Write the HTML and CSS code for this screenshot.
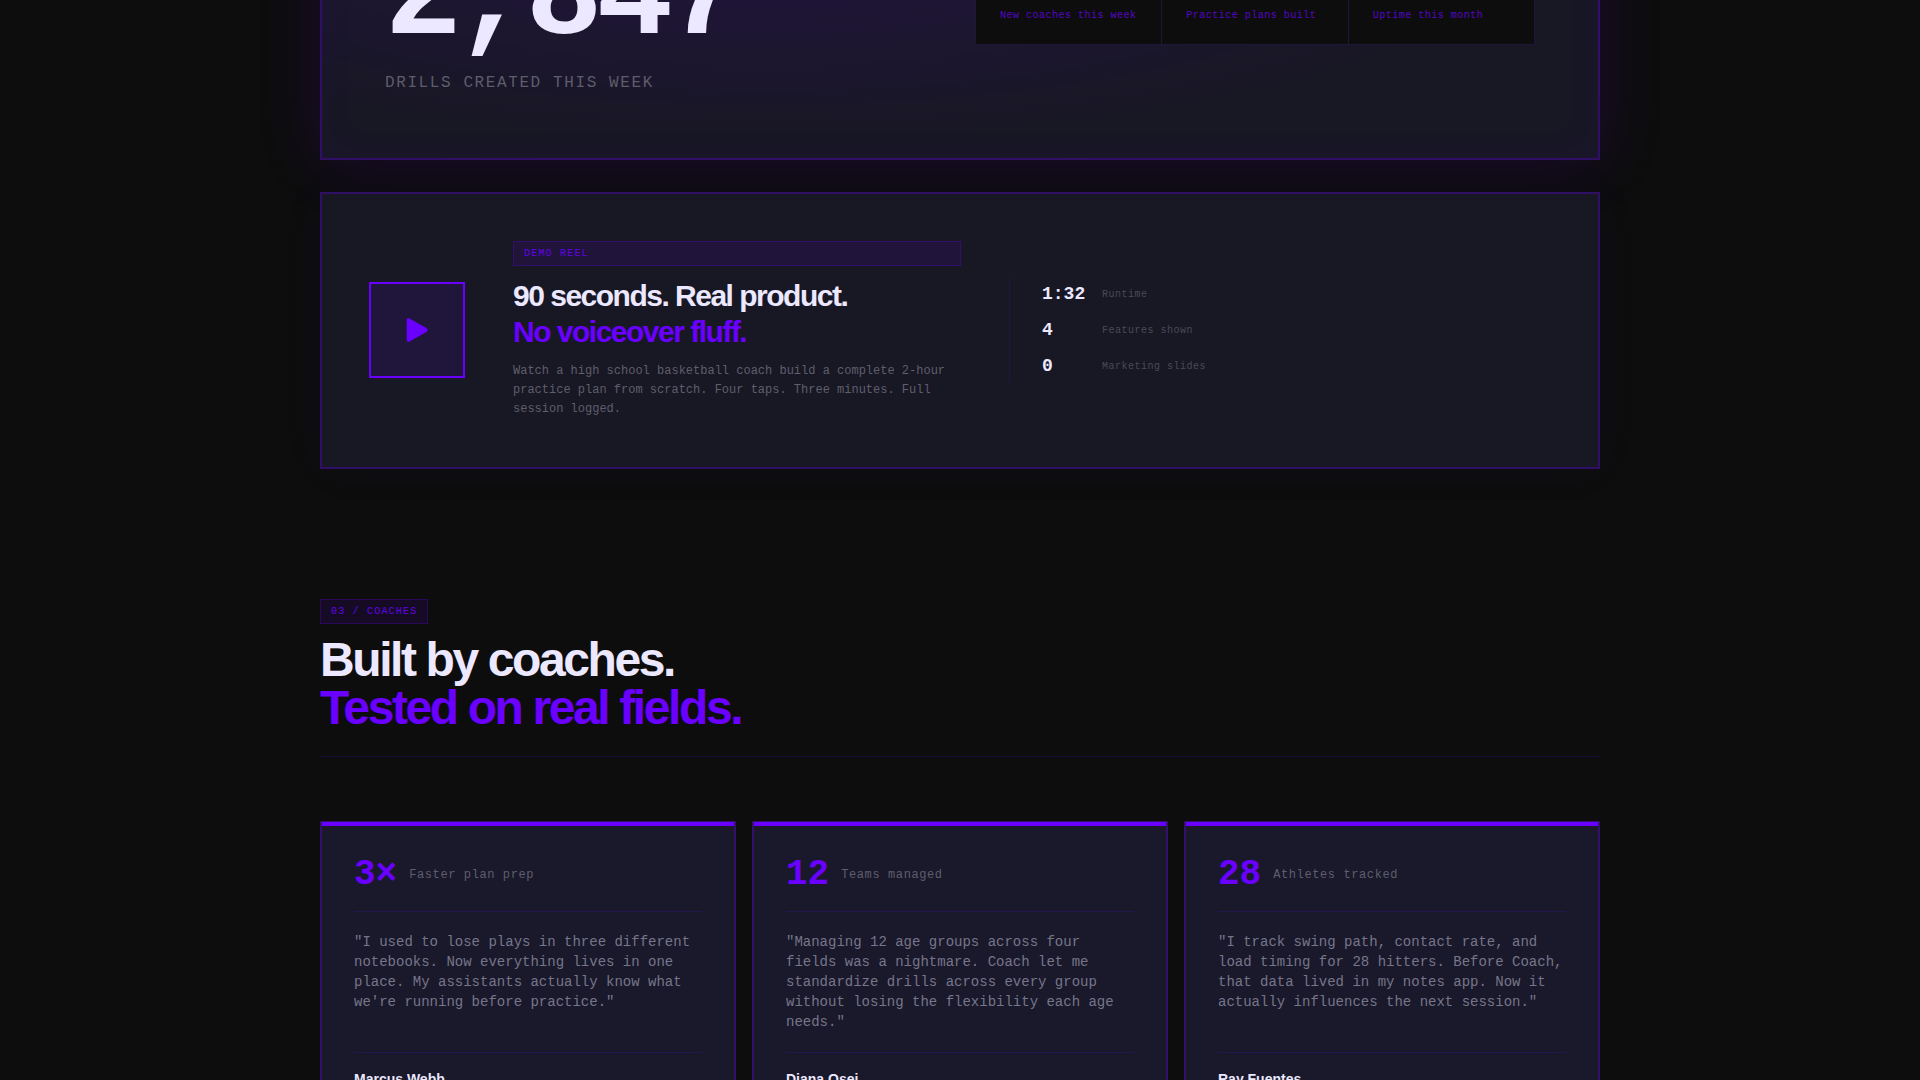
FILE: index.html
```
<!DOCTYPE html>
<html lang="en">
<head>
<meta charset="utf-8">
<meta name="viewport" content="width=device-width, initial-scale=1">
<title>Coach</title>
<link rel="stylesheet" href="styles.css">
</head>
<body>
<main class="page">
  <section class="hero">
    <div class="hero-main">
      <p class="hero-number">2,847</p>
      <p class="hero-label">DRILLS CREATED THIS WEEK</p>
    </div>
    <ul class="hero-stats">
      <li>New coaches this week</li>
      <li>Practice plans built</li>
      <li>Uptime this month</li>
    </ul>
  </section>

  <section class="demo">
    <button class="play" type="button" aria-label="Play demo reel">
      <svg width="24" height="24" viewBox="0 0 24 24" aria-hidden="true"><path d="M1.700 2.200v19.600c0 1.600 1.500 2.300 2.900 1.600l16.800-9.500c1.700-1 1.700-2.800 0-3.800L4.600.6C3.200-.1 1.700.6 1.700 2.200z" fill="currentColor"/></svg>
    </button>
    <div class="demo-text">
      <span class="badge">DEMO REEL</span>
      <h2 class="demo-title">90 seconds. Real product.<br><em>No voiceover fluff.</em></h2>
      <p class="demo-copy">Watch a high school basketball coach build a complete 2-hour practice plan from scratch. Four taps. Three minutes. Full session logged.</p>
    </div>
    <dl class="facts">
      <div><dt>Runtime</dt><dd>1:32</dd></div>
      <div><dt>Features shown</dt><dd>4</dd></div>
      <div><dt>Marketing slides</dt><dd>0</dd></div>
    </dl>
  </section>

  <section class="coaches">
    <header class="section-head">
      <span class="badge">03 / COACHES</span>
      <h2 class="section-title">Built by coaches.<br><em>Tested on real fields.</em></h2>
    </header>
    <div class="cards">
      <article class="card">
        <p class="metric"><strong>3×</strong><span>Faster plan prep</span></p>
        <blockquote>"I used to lose plays in three different notebooks. Now everything lives in one place. My assistants actually know what we're running before practice."</blockquote>
        <p class="author">Marcus Webb</p>
      </article>
      <article class="card">
        <p class="metric"><strong>12</strong><span>Teams managed</span></p>
        <blockquote>"Managing 12 age groups across four fields was a nightmare. Coach let me standardize drills across every group without losing the flexibility each age needs."</blockquote>
        <p class="author">Diana Osei</p>
      </article>
      <article class="card">
        <p class="metric"><strong>28</strong><span>Athletes tracked</span></p>
        <blockquote>"I track swing path, contact rate, and load timing for 28 hitters. Before Coach, that data lived in my notes app. Now it actually influences the next session."</blockquote>
        <p class="author">Ray Fuentes</p>
      </article>
    </div>
  </section>
</main>
</body>
</html>
```
FILE: styles.css
```
:root {
  --bg: #0d0d0d;
  --accent: #6a00ff;
  --light: #ebe8ff;
  --line: rgba(106, 0, 255, 0.3);
  --line-soft: rgba(90, 20, 255, 0.17);
  --mono: "Liberation Mono", monospace;
  --sans: "Liberation Sans", sans-serif;
}

* {
  box-sizing: border-box;
  margin: 0;
  padding: 0;
}

html {
  overflow: hidden;
}

body {
  height: 100vh;
  overflow: hidden;
  background: var(--bg);
  color: var(--light);
  font-family: var(--mono);
}

em {
  font-style: normal;
  color: var(--accent);
}

.page {
  max-width: 1280px;
  margin: 0 auto;
}

.hero {
  display: grid;
  grid-template-columns: 1fr 1fr;
  align-items: center;
  gap: 30px;
  margin-top: -243px;
  padding: 120px 63px 65px;
  border: 2px solid var(--line);
  background:
    radial-gradient(ellipse at 35% 45%, rgba(106, 0, 255, 0.12), transparent 65%),
    #181724;
  box-shadow:
    0 0 60px rgba(120, 0, 255, 0.15),
    inset 0 0 40px rgba(106, 0, 255, 0.04);
}

.hero-main {
  padding-top: 56px;
}

.hero-number {
  font-size: 128px;
  font-weight: 700;
  line-height: 128px;
  letter-spacing: -0.05em;
}

.hero-label {
  margin-top: 10px;
  font-size: 16px;
  line-height: 20px;
  letter-spacing: 0.1em;
  color: #5f5c6c;
}

.hero-stats {
  display: grid;
  grid-template-columns: repeat(3, 1fr);
  gap: 1px;
  border: 1px solid #1f173b;
  background: #1f173b;
  list-style: none;
}

.hero-stats li {
  padding: 80px 24px 20px;
  background: var(--bg);
  font-size: 10px;
  line-height: 16px;
  letter-spacing: 0.05em;
  white-space: nowrap;
  color: #5505c8;
}

.demo {
  display: grid;
  grid-template-columns: auto minmax(0, 448px) 1fr;
  align-items: center;
  gap: 48px;
  margin-top: 32px;
  padding: 47px;
  border: 2px solid var(--line);
  background: #181724;
  box-shadow: 0 0 48px rgba(106, 0, 255, 0.04);
}

.play {
  display: grid;
  place-items: center;
  width: 96px;
  height: 96px;
  border: 2px solid var(--accent);
  background: #20153a;
  color: var(--accent);
  cursor: pointer;
}

.demo-text {
  display: flex;
  flex-direction: column;
  gap: 12px;
}

.badge {
  padding: 6px 10px;
  border: 1px solid rgba(106, 0, 255, 0.25);
  background: rgba(106, 0, 255, 0.1);
  font-size: 10px;
  line-height: 11px;
  letter-spacing: 0.12em;
  color: #6203e8;
}

.demo-title {
  font-family: var(--sans);
  font-size: 30px;
  line-height: 36px;
  letter-spacing: -0.05em;
}

.demo-copy {
  font-size: 12px;
  line-height: 1.6;
  color: #5f5e6c;
}

.facts {
  display: flex;
  flex-direction: column;
  gap: 16px;
  padding: 6px 0 6px 32px;
  border-left: 1px solid var(--line-soft);
}

.facts div {
  display: flex;
  flex-direction: row-reverse;
  align-items: center;
  justify-content: flex-end;
  gap: 12px;
}

.facts dd {
  min-width: 48px;
  font-size: 18px;
  font-weight: 700;
  line-height: 20px;
}

.facts dt {
  font-size: 10px;
  letter-spacing: 0.05em;
  color: #4b4957;
}

.coaches {
  padding-top: 130px;
}

.section-head {
  display: flex;
  flex-direction: column;
  align-items: flex-start;
  gap: 12px;
  padding-bottom: 24px;
  border-bottom: 1px solid var(--line-soft);
}

.section-title {
  font-family: var(--sans);
  font-size: 48px;
  line-height: 48px;
  letter-spacing: -0.05em;
}

.cards {
  display: grid;
  grid-template-columns: repeat(3, 1fr);
  gap: 16px;
  margin-top: 64px;
}

.card {
  position: relative;
  display: flex;
  flex-direction: column;
  padding: 34px 32px 32px;
  border: 2px solid var(--line);
  background: #19192b;
}

.card::before {
  content: "";
  position: absolute;
  top: -1px;
  left: 0;
  right: 0;
  height: 4px;
  background: var(--accent);
}

.metric {
  display: flex;
  align-items: center;
  gap: 12px;
  padding-bottom: 18px;
  border-bottom: 1px solid var(--line-soft);
}

.metric strong {
  font-size: 36px;
  line-height: 36px;
  color: var(--accent);
}

.metric span {
  font-size: 12px;
  letter-spacing: 0.05em;
  color: #5f5e6c;
}

.card blockquote {
  flex: 1;
  padding: 20px 0;
  font-size: 14px;
  line-height: 20px;
  color: #77758a;
}

.author {
  padding-top: 16px;
  border-top: 1px solid var(--line-soft);
  font-family: var(--sans);
  font-size: 14px;
  font-weight: 700;
  line-height: 20px;
}
```
